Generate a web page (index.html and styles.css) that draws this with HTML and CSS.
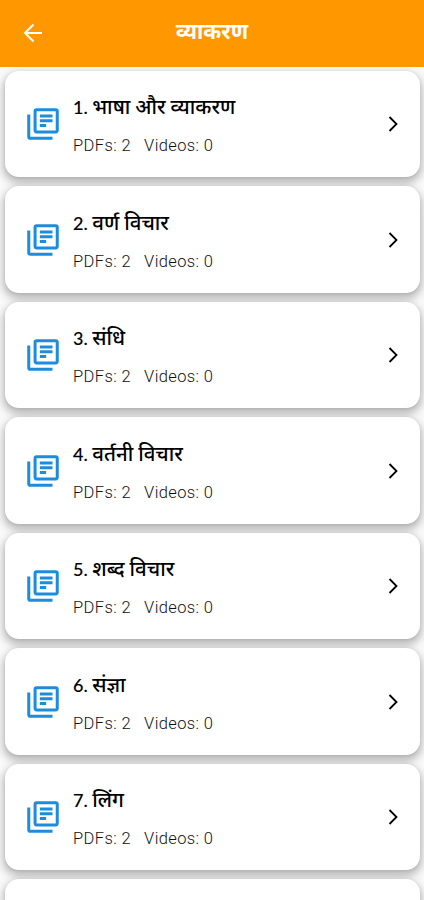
FILE: index.html
```html
<!DOCTYPE html>
<html lang="hi">
<head>
<meta charset="utf-8">
<title>व्याकरण</title>
<link rel="stylesheet" href="styles.css">
</head>
<body>
<header class="bar">
  <svg class="back" viewBox="0 0 24 24"><path d="M21 12H4M12.500 3.500L4 12l8.500 8.500"/></svg>
  <h1>व्याकरण</h1>
</header>
<main class="list" id="list"></main>
<script src="app.js"></script>
</body>
</html>
```
FILE: styles.css
```css
* { box-sizing: border-box; }
body { margin: 0; height: 900px; overflow: hidden; display: flex; flex-direction: column; background: #fafafa; font-family: Lato, "Noto Sans", sans-serif; color: #000; }
.bar { flex: none; height: 66.5px; background: #ff9800; display: grid; grid-template-columns: 46px 1fr 46px; align-items: center; }
.back { width: 24px; height: 24px; fill: none; stroke: #fff; stroke-width: 2; margin-left: 21px; }
.bar h1 { margin: 0; padding-bottom: 4px; text-align: center; color: #fff; font-size: 21.6px; line-height: 28px; font-weight: 700; }
.list { flex: 1; min-height: 0; overflow: hidden; display: flex; flex-direction: column; gap: 9.2px; padding: 4.5px 4.5px 0; }
.card { height: 106.3px; flex: none; border-radius: 14px; background: #fff; box-shadow: 0 4px 9px 2px rgba(0,0,0,.26), 0 1px 3px rgba(0,0,0,.08); display: flex; align-items: center; padding: 0 14.5px 0 19px; }
.card.next { flex: 1; height: auto; min-height: 0; border-radius: 14px 14px 0 0; }
.book { width: 38px; height: 38px; fill: none; stroke: #1c8cdc; stroke-width: 1.9; flex: none; }
.text { flex: 1; margin-left: 11.5px; }
.text h2 { margin: -1px 0 0; font-size: 20.5px; line-height: 24px; font-weight: 500; white-space: pre; word-spacing: -.2px; }
.num { font-size: 18px; word-spacing: 0; -webkit-text-stroke: .1px #000; }
.text p { margin: 17px 0 -3px; font: 300 16.5px/20px Roboto, sans-serif; letter-spacing: .38px; color: #111; white-space: pre; }
.chev { width: 24px; height: 24px; fill: none; stroke: #000; stroke-width: 1.8; }
```
FILE: app.js
```javascript
const titles = ["भाषा और व्याकरण", "वर्ण विचार", "संधि", "वर्तनी विचार", "शब्द विचार", "संज्ञा", "लिंग"];
document.getElementById("list").innerHTML = titles.map((t, i) => `
<article class="card">
  <svg class="book" viewBox="0 0 24 24"><rect x="7" y="3" width="14" height="14" rx="1"/><path d="M3 6v14q0 1 1 1h14M10 7h8M10 10h8M10 13h4"/></svg>
  <div class="text"><h2><span class="num">${i + 1}. </span>${t}</h2><p>PDFs: 2   Videos: 0</p></div>
  <svg class="chev" viewBox="0 0 24 24"><path d="M8.500 5l7 7-7 7"/></svg>
</article>`).join("") + '<article class="card next"></article>';
```
